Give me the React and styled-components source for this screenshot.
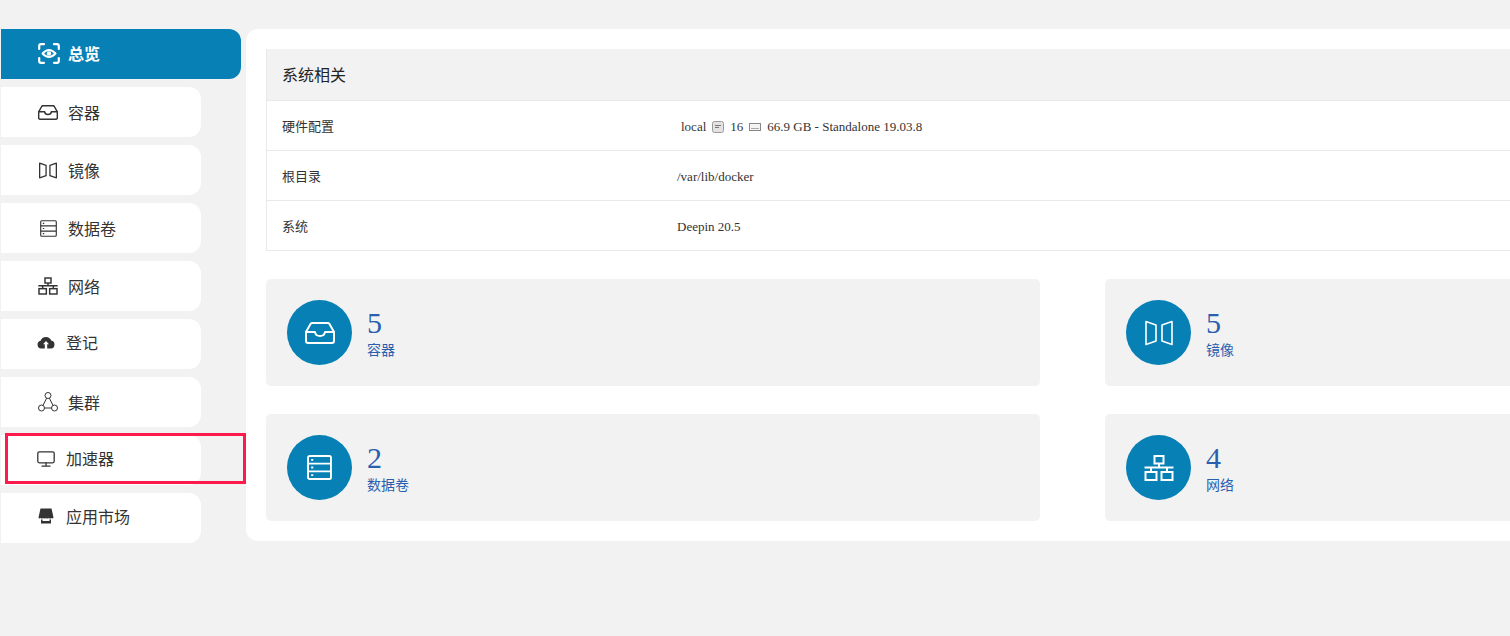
import React from "react";
import styled, { createGlobalStyle } from "styled-components";

const Global = createGlobalStyle`
  html, body { margin: 0; padding: 0; height: 636px; overflow: hidden; background: #f2f2f2; }
  body { font-family: "Liberation Serif", "Noto Sans CJK SC", serif; }
  * { box-sizing: border-box; }
`;

const Page = styled.div`
  position: relative;
  display: flex;
  width: 1510px;
  height: 636px;
  padding: 29px 0 0 1px;
  overflow: hidden;
  background: #f2f2f2;
`;
const Sidebar = styled.nav`
  flex: none;
  width: 245px;
  display: flex;
  flex-direction: column;
  gap: 8px;
`;
const NavItem = styled.div`
  display: flex;
  align-items: center;
  height: 50px;
  width: ${p => (p.$active ? "240px" : "200px")};
  padding-left: ${p => p.$pad}px;
  padding-bottom: ${p => p.$lift ?? 0}px;
  gap: ${p => p.$gap}px;
  background: ${p => (p.$active ? "#0680b5" : "#fff")};
  color: ${p => (p.$active ? "#fff" : "#333")};
  border-radius: 0 12px 12px 0;
  font-family: "Noto Sans CJK SC", sans-serif;
  font-size: 16px;
  font-weight: ${p => (p.$active ? 700 : 400)};
`;
const IconSlot = styled.span`
  flex: none;
  display: flex;
  align-items: center;
  justify-content: center;
  width: ${p => p.$w}px;
  padding-top: ${p => p.$drop ?? 0}px;
`;
const Main = styled.main`
  flex: none;
  width: 1660px;
  height: 512px;
  padding: 20px 0 0 20px;
  background: #fff;
  border-radius: 12px;
`;
const Table = styled.section`
  width: 1613px;
  border: 1px solid #e9e9e9;
  border-top: 0;
  font-size: 13px;
  color: #333;
`;
const TableHead = styled.div`
  display: flex;
  align-items: center;
  height: 52px;
  padding: 0 0 2px 15px;
  background: #f2f2f2;
  border-bottom: 1px solid #e9e9e9;
  font-family: "Noto Sans CJK SC", sans-serif;
  font-size: 16px;
  color: #222;
`;
const Row = styled.div`
  display: grid;
  grid-template-columns: 395px 1fr;
  align-items: center;
  height: 50px;
  padding-left: 15px;
  border-bottom: 1px solid #e9e9e9;
  &:last-child { height: 49px; border-bottom: 0; }
`;
const RowLabel = styled.div`
  font-family: "Noto Sans CJK SC", sans-serif;
  font-size: 13px;
`;
const RowValue = styled.div`
  display: flex;
  align-items: center;
  gap: 6px;
  padding-top: 2px;
  padding-left: ${p => (p.$inset ? 4 : 0)}px;
  white-space: pre;
`;
const Tiles = styled.div`
  display: grid;
  grid-template-columns: 774px 774px;
  column-gap: 65px;
  row-gap: 28px;
  margin-top: 28px;
`;
const Tile = styled.div`
  display: flex;
  align-items: center;
  gap: 15px;
  height: 107px;
  padding: 0 21px;
  background: #f2f2f2;
  border-radius: 5px;
`;
const Circle = styled.div`
  flex: none;
  display: flex;
  align-items: center;
  justify-content: center;
  width: 65px;
  height: 65px;
  border-radius: 50%;
  background: #0680b5;
`;
const TileText = styled.div`
  display: flex;
  flex-direction: column;
  padding-bottom: 2px;
  color: #2a5fb0;
`;
const Count = styled.div`
  padding-top: 1px;
  font-size: 30px;
  line-height: 33px;
`;
const TileLabel = styled.div`
  font-family: "Noto Sans CJK SC", sans-serif;
  font-size: 14px;
  line-height: 20px;
`;
const Highlight = styled.div`
  position: absolute;
  left: 5px;
  top: 433px;
  width: 241px;
  height: 51px;
  border: 3px solid #ff1a4d;
  pointer-events: none;
`;

const Inbox = ({ w, h, color = "#333", sw = 2 }) => (
  <svg width={w} height={h} viewBox="0 0 30 22" fill="none" stroke={color} strokeWidth={sw} strokeLinejoin="round" strokeLinecap="round">
    <path d="M1 10 L5.500 2 Q6.100 1 7.500 1 H22.500 Q23.900 1 24.500 2 L29 10 V19 Q29 21 27 21 H3 Q1 21 1 19 Z" />
    <path d="M1 10 H10 Q10.500 14 15 14 Q19.500 14 20 10 H29" />
  </svg>
);
const Book = ({ w, h, color = "#333", sw = 1.6 }) => (
  <svg width={w} height={h} viewBox="0 0 28 26" fill="none" stroke={color} strokeWidth={sw} strokeLinejoin="round">
    <path d="M1 1.500 L11 5 V21 L1 24.500 Z" />
    <path d="M27 1.500 L17 5 V21 L27 24.500 Z" />
  </svg>
);
const Disk = ({ w, h, color = "#333", sw = 1.8 }) => (
  <svg width={w} height={h} viewBox="0 0 24 24" fill="none" stroke={color} strokeWidth={sw} strokeLinejoin="round">
    <rect x="1" y="1" width="22" height="22" rx="1.500" />
    <path d="M1 8.300 H23 M1 15.700 H23" />
    <path d="M4 4.700 H6 M4 12 H6 M4 19.300 H6" />
  </svg>
);
const Net = ({ w, h, color = "#333", sw = 2 }) => (
  <svg width={w} height={h} viewBox="0 0 30 26" fill="none" stroke={color} strokeWidth={sw}>
    <rect x="10.500" y="1" width="9" height="7.500" />
    <rect x="1.500" y="17" width="11" height="8" />
    <rect x="17.500" y="17" width="11" height="8" />
    <path d="M15 8.500 V12.500 M0.500 12.500 H29.500 M7 12.500 V17 M23 12.500 V17" />
  </svg>
);
const EyeScan = () => (
  <svg width="22" height="21" viewBox="0 0 22 21" fill="none" stroke="#fff" strokeWidth="2.200" strokeLinecap="round" strokeLinejoin="round">
    <path d="M1.200 6 V3 Q1.200 1.200 3 1.200 H6 M16 1.200 H19 Q20.800 1.200 20.800 3 V6 M20.800 15 V18 Q20.800 19.800 19 19.800 H16 M6 19.800 H3 Q1.200 19.800 1.200 18 V15" />
    <path d="M4.500 10.500 Q11 3.500 17.500 10.500 Q11 17.500 4.500 10.500 Z" strokeWidth="2" />
    <circle cx="11" cy="10.500" r="2.200" fill="#fff" stroke="none" />
  </svg>
);
const CloudUp = () => (
  <svg width="18" height="14" viewBox="0 0 18 14">
    <path fill="#333" d="M4.200 13.500 A3.900 3.900 0 0 1 3.600 5.800 A5.600 5.600 0 0 1 14.200 5.600 A4 4 0 0 1 14 13.500 H10.200 V9.300 H12 L9 6.100 L6 9.300 H7.800 V13.500 Z" />
  </svg>
);
const Cluster = () => (
  <svg width="20" height="20" viewBox="0 0 20 20" fill="none" stroke="#333" strokeWidth="1">
    <circle cx="10" cy="3.500" r="3" />
    <circle cx="3.500" cy="16" r="3" />
    <circle cx="16.500" cy="16" r="3" />
    <path d="M8.600 6.200 L5 13.400 M11.400 6.200 L15 13.400 M6.500 16 H13.500" />
  </svg>
);
const Monitor = () => (
  <svg width="18" height="16" viewBox="0 0 18 16" fill="none" stroke="#333" strokeWidth="1.300" strokeLinejoin="round" strokeLinecap="round">
    <rect x="0.800" y="0.800" width="16.400" height="11" rx="1.500" />
    <path d="M9 12 V15.200 M5 15.200 H13" />
  </svg>
);
const Store = () => (
  <svg width="16" height="16" viewBox="0 0 16 16">
    <path fill="#333" d="M2.500 0.500 H13.500 L15.500 9.500 Q14.800 11 13.400 10 Q12 11 10.700 10 Q9.300 11 8 10 Q6.700 11 5.300 10 Q4 11 2.600 10 Q1.200 11 0.500 9.500 Z" />
    <path fill="#333" d="M3 11.500 H4.500 V13 H11.500 V11.500 H13 V15.500 H3 Z" />
  </svg>
);
const Cpu = () => (
  <svg width="12" height="12" viewBox="0 0 12 12">
    <rect x="0.500" y="0.500" width="11" height="11" rx="2" fill="#e3e3e3" stroke="#999" strokeWidth="1" />
    <path d="M3 4.500 H9 M3 6.500 H7" stroke="#777" strokeWidth="1" fill="none" />
  </svg>
);
const Ram = () => (
  <svg width="12" height="8" viewBox="0 0 12 8">
    <rect x="0.500" y="0.500" width="11" height="7" fill="#f4f4f4" stroke="#888" strokeWidth="1" />
    <path d="M2 5.500 H10" stroke="#aaa" strokeWidth="1" fill="none" />
  </svg>
);

const nav = [
  { label: "容器", icon: <Inbox w={20} h={15} sw={2.200} />, w: 20, pad: 37, gap: 10 },
  { label: "镜像", icon: <Book w={18} h={17} sw={2} />, w: 20, pad: 37, gap: 10 },
  { label: "数据卷", icon: <Disk w={17} h={17} sw={1.600} />, w: 20, pad: 37, gap: 10 },
  { label: "网络", icon: <Net w={20} h={18} sw={2.200} />, w: 20, pad: 37, gap: 10 },
  { label: "登记", icon: <CloudUp />, w: 18, pad: 36, gap: 11, lift: 4 },
  { label: "集群", icon: <Cluster />, w: 20, pad: 37, gap: 10 },
  { label: "加速器", icon: <Monitor />, w: 18, pad: 36, gap: 11, lift: 4, drop: 2 },
  { label: "应用市场", icon: <Store />, w: 18, pad: 36, gap: 11, lift: 4 },
];

const tiles = [
  { n: 5, label: "容器", icon: <Inbox w={30} h={22} color="#fff" /> },
  { n: 5, label: "镜像", icon: <Book w={28} h={26} color="#fff" /> },
  { n: 2, label: "数据卷", icon: <Disk w={25} h={25} color="#fff" /> },
  { n: 4, label: "网络", icon: <Net w={30} h={26} color="#fff" /> },
];

export default function App() {
  return (
    <Page>
      <Global />
      <Sidebar>
        <NavItem $active $pad={37} $gap={8} $lift={2}><IconSlot $w={22}><EyeScan /></IconSlot>总览</NavItem>
        {nav.map(n => (
          <NavItem key={n.label} $pad={n.pad} $gap={n.gap} $lift={n.lift}>
            <IconSlot $w={n.w} $drop={n.drop}>{n.icon}</IconSlot>{n.label}
          </NavItem>
        ))}
      </Sidebar>
      <Main>
        <Table>
          <TableHead>系统相关</TableHead>
          <Row>
            <RowLabel>硬件配置</RowLabel>
            <RowValue $inset>local<Cpu />16<Ram />66.9 GB - Standalone 19.03.8</RowValue>
          </Row>
          <Row>
            <RowLabel>根目录</RowLabel>
            <RowValue>/var/lib/docker</RowValue>
          </Row>
          <Row>
            <RowLabel>系统</RowLabel>
            <RowValue>Deepin 20.5</RowValue>
          </Row>
        </Table>
        <Tiles>
          {tiles.map((t, i) => (
            <Tile key={i}>
              <Circle>{t.icon}</Circle>
              <TileText>
                <Count>{t.n}</Count>
                <TileLabel>{t.label}</TileLabel>
              </TileText>
            </Tile>
          ))}
        </Tiles>
      </Main>
      <Highlight />
    </Page>
  );
}
